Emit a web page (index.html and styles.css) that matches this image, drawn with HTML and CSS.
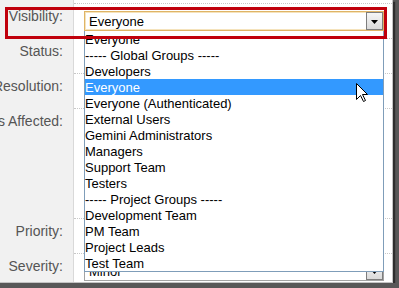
FILE: index.html
```html
<!DOCTYPE html>
<html>
<head>
<meta charset="utf-8">
<link rel="stylesheet" href="styles.css">
</head>
<body>
<div class="frame">
  <div class="form">
    <div class="lab"></div><div class="fld first"></div>

    <div class="lab">Visibility:</div>
    <div class="fld">
      <div class="select focus"><span class="val">Everyone</span><span class="btn"><svg width="7" height="4" viewBox="0 0 7 4"><polygon points="0,0 7,0 3.5,4" fill="#000"/></svg></span></div>
    </div>

    <div class="lab">Status:</div>
    <div class="fld">
      <div class="select"><span class="val"></span><span class="btn"><svg width="7" height="4" viewBox="0 0 7 4"><polygon points="0,0 7,0 3.5,4" fill="#000"/></svg></span></div>
    </div>

    <div class="lab">Resolution:</div>
    <div class="fld">
      <div class="select"><span class="val"></span><span class="btn"><svg width="7" height="4" viewBox="0 0 7 4"><polygon points="0,0 7,0 3.5,4" fill="#000"/></svg></span></div>
    </div>

    <div class="lab">Components Affected:</div>
    <div class="fld"></div>

    <div class="lab">Priority:</div>
    <div class="fld">
      <div class="select"><span class="val"></span><span class="btn"><svg width="7" height="4" viewBox="0 0 7 4"><polygon points="0,0 7,0 3.5,4" fill="#000"/></svg></span></div>
    </div>

    <div class="lab">Severity:</div>
    <div class="fld">
      <div class="select"><span class="val">Minor</span><span class="btn"><svg width="7" height="4" viewBox="0 0 7 4"><polygon points="0,0 7,0 3.5,4" fill="#000"/></svg></span></div>
    </div>
  </div>

  <ul class="list">
    <li>Everyone</li>
    <li>----- Global Groups -----</li>
    <li>Developers</li>
    <li class="sel">Everyone</li>
    <li>Everyone (Authenticated)</li>
    <li>External Users</li>
    <li>Gemini Administrators</li>
    <li>Managers</li>
    <li>Support Team</li>
    <li>Testers</li>
    <li>----- Project Groups -----</li>
    <li>Development Team</li>
    <li>PM Team</li>
    <li>Project Leads</li>
    <li>Test Team</li>
  </ul>

  <div class="callout"></div>

  <svg class="cursor" width="13" height="20" viewBox="0 0 13 20">
    <path d="M0.5,0.5 L0.5,16.5 L4.5,12.5 L7.5,18.5 L9.5,17.5 L6.5,11.5 L11.5,11.5 Z" fill="#fff" stroke="#000" stroke-width="1" stroke-linejoin="miter"/>
  </svg>
</div>
</body>
</html>
```
FILE: styles.css
```css
html {
  background: #585858;
}
body {
  margin: 0;
  font-family: "Liberation Sans", Arial, sans-serif;
}
.frame {
  position: relative;
  width: 392px;
  height: 282px;
  background: #fff;
  border-right: 1px solid #c4c4c4;
  border-bottom: 1px solid #c4c4c4;
  overflow: hidden;
  box-shadow: 2px 2px 1px #2e2e2e;
}
.form {
  display: grid;
  grid-template-columns: 74px 1fr;
  grid-template-rows: 3px 35px 35px 35px 110px 35px 1fr;
  height: 100%;
}
.lab {
  background: #f1f1f1;
  border-right: 1px solid #d9d9d9;
  display: flex;
  justify-content: flex-end;
  padding: 5px 10px 0 0;
  font-size: 14px;
  line-height: 16px;
  color: #555;
  white-space: nowrap;
  min-width: 0;
}
.fld {
  border-top: 1px dotted #c8c8c8;
  padding: 7px 0 0 10px;
}
.fld.first {
  border-top: 0;
  padding: 0;
}
.select {
  width: 300px;
  height: 20px;
  box-sizing: border-box;
  border: 1px solid #a3a3a3;
  display: flex;
  background: #fff;
  font-size: 13px;
  color: #000;
}
.select.focus {
  border-color: #dfb466;
  box-shadow: inset 0 0 0 1px #f5e3bc;
}
.val {
  flex: 1;
  padding: 1px 0 0 4px;
  line-height: 17px;
  white-space: nowrap;
}
.btn {
  width: 17px;
  box-sizing: border-box;
  border: 1px solid #7d7d7d;
  background: linear-gradient(#f6f6f6, #dadada);
  display: flex;
  justify-content: center;
  align-items: flex-start;
  padding-top: 7px;
}
.btn svg {
  display: block;
}
.list {
  position: absolute;
  left: 84px;
  top: 31px;
  width: 300px;
  box-sizing: border-box;
  margin: 0;
  padding: 0;
  list-style: none;
  background: #fff;
  border: 1px solid #7f9db9;
  border-top: 0;
  font-size: 13px;
  color: #000;
}
.list li {
  height: 16px;
  box-sizing: border-box;
  padding: 1px 0 0 0;
  line-height: 15px;
  white-space: nowrap;
}
.list li.sel {
  background: #3399ff;
  color: #fff;
}
.callout {
  position: absolute;
  left: 5px;
  top: 7px;
  width: 382px;
  height: 32px;
  box-sizing: border-box;
  border: 3px solid #c0000c;
}
.cursor {
  position: absolute;
  left: 356px;
  top: 83px;
}
```
